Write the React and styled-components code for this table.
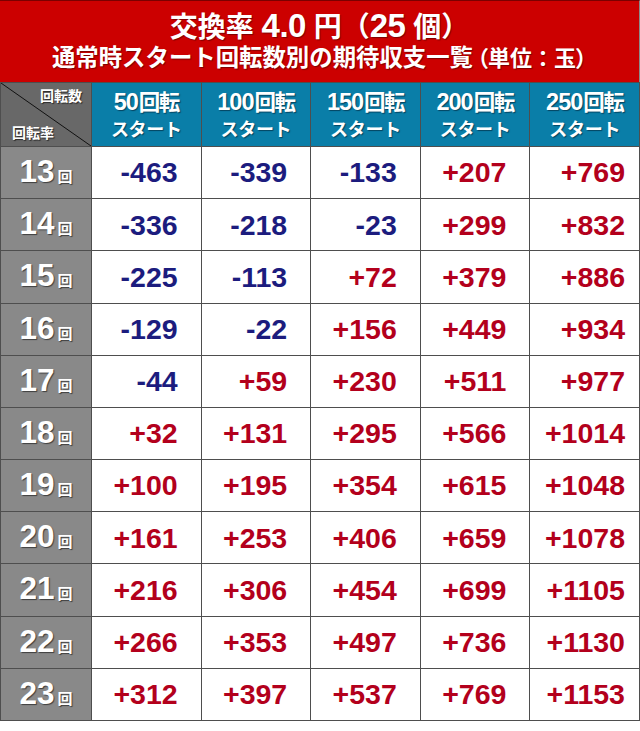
import React from "react";
import styled, { createGlobalStyle } from "styled-components";

const GlobalStyle = createGlobalStyle`
  html, body { margin: 0; padding: 0; background: #fff; }
  * { box-sizing: border-box; }
`;

const JP = `"Liberation Sans", "Noto Sans CJK JP", sans-serif`;

const Frame = styled.div`
  width: 640px;
  font-family: ${JP};
`;

const TitleBar = styled.div`
  height: 82px;
  background: #cc0000;
  border-top: 1px solid #7a0000;
  border-right: 1px solid #8a8a8a;
  display: flex;
  flex-direction: column;
  align-items: center;
  color: #fff;
  font-weight: 700;
  text-shadow: 1px 1px 1px rgba(60, 0, 0, 0.55);
`;

const TitleMain = styled.div`
  font-size: 28px;
  line-height: 34px;
  margin-top: 8px;
  height: 34px;
  display: flex;
  align-items: baseline;
  white-space: pre;
`;

const TitleNum = styled.span`
  font-size: 33px;
  letter-spacing: -0.5px;
`;

const SubTitle = styled.div`
  font-size: 23.4px;
  line-height: 26px;
  margin-top: 2px;
  white-space: pre;
`;

const SubNote = styled.span`
  font-size: 22px;
  margin-left: 4px;
`;

const Palt = styled.span`
  font-feature-settings: "palt";
`;

const Grid = styled.div`
  display: grid;
  grid-template-columns: 90px repeat(5, 1fr);
  grid-template-rows: 63px repeat(11, 1fr);
  height: 639px;
  gap: 1px;
  padding: 1px;
  background: #4e4e4e;
`;

const Corner = styled.div`
  position: relative;
  background: #686868;
  color: #fff;
  font-weight: 700;
  font-size: 14px;
  text-shadow: 1px 1px 1px rgba(0, 0, 0, 0.6);
  font-family: "Noto Sans CJK JP", sans-serif;
`;

const Diagonal = styled.svg`
  position: absolute;
  inset: 0;
  width: 100%;
  height: 100%;
`;

const CornerLabel = styled.span`
  position: absolute;
  line-height: 1;
  ${(p) => (p.$top ? "top: 5px; right: 9px;" : "bottom: 7px; left: 11px;")}
`;

const HeadCell = styled.div`
  background: #0a7ea8;
  color: #fff;
  font-weight: 700;
  display: flex;
  flex-direction: column;
  align-items: center;
  justify-content: flex-start;
  padding-top: 5px;
  text-shadow: 1px 1px 1px rgba(0, 30, 50, 0.6);
`;

const HeadTop = styled.div`
  display: flex;
  align-items: baseline;
  line-height: 26px;
  height: 26px;
`;

const HeadNum = styled.span`
  font-size: 23.5px;
  letter-spacing: -1px;
  margin-right: 1px;
`;

const HeadUnit = styled.span`
  font-size: 21.5px;
  letter-spacing: -1.5px;
  font-family: "Noto Sans CJK JP", sans-serif;
`;

const HeadSub = styled.div`
  font-size: 18px;
  letter-spacing: -0.3px;
  line-height: 20px;
  height: 20px;
  font-family: "Noto Sans CJK JP", sans-serif;
  margin-top: 4px;
`;

const RowHead = styled.div`
  background: #898989;
  color: #fff;
  font-weight: 700;
  display: flex;
  align-items: baseline;
  justify-content: center;
  padding-top: 9px;
  text-shadow: 1px 1px 1px rgba(0, 0, 0, 0.55);
`;

const RowNum = styled.span`
  font-size: 31.5px;
  line-height: 1;
`;

const RowUnit = styled.span`
  font-size: 15px;
  margin-left: 3px;
  font-family: "Noto Sans CJK JP", sans-serif;
`;

const ValueCell = styled.div`
  background: #fff;
  display: flex;
  align-items: center;
  justify-content: flex-end;
  padding-right: ${(p) => (p.$last ? "14px" : "23px")};
  font-size: 28.5px;
  font-weight: 700;
  color: ${(p) => (p.$neg ? "#1c1c7e" : "#b3001c")};
  line-height: 1;
`;

const cols = [50, 100, 150, 200, 250];

const rows = [
  [13, ["-463", "-339", "-133", "+207", "+769"]],
  [14, ["-336", "-218", "-23", "+299", "+832"]],
  [15, ["-225", "-113", "+72", "+379", "+886"]],
  [16, ["-129", "-22", "+156", "+449", "+934"]],
  [17, ["-44", "+59", "+230", "+511", "+977"]],
  [18, ["+32", "+131", "+295", "+566", "+1014"]],
  [19, ["+100", "+195", "+354", "+615", "+1048"]],
  [20, ["+161", "+253", "+406", "+659", "+1078"]],
  [21, ["+216", "+306", "+454", "+699", "+1105"]],
  [22, ["+266", "+353", "+497", "+736", "+1130"]],
  [23, ["+312", "+397", "+537", "+769", "+1153"]],
];

export default function App() {
  return (
    <>
      <GlobalStyle />
      <Frame>
        <TitleBar>
          <TitleMain>
            交換率 <TitleNum>4.0</TitleNum> 円（<TitleNum>25</TitleNum> 個）
          </TitleMain>
          <SubTitle>
            通常時スタート回転数別の期待収支一覧
            <SubNote>
              <Palt>（</Palt>単位：玉<Palt>）</Palt>
            </SubNote>
          </SubTitle>
        </TitleBar>
        <Grid>
          <Corner>
            <Diagonal viewBox="0 0 100 100" preserveAspectRatio="none">
              <line x1="0" y1="0" x2="100" y2="100" stroke="#111" strokeWidth="1" vectorEffect="non-scaling-stroke" />
            </Diagonal>
            <CornerLabel $top>回転数</CornerLabel>
            <CornerLabel>回転率</CornerLabel>
          </Corner>
          {cols.map((c) => (
            <HeadCell key={c}>
              <HeadTop>
                <HeadNum>{c}</HeadNum>
                <HeadUnit>回転</HeadUnit>
              </HeadTop>
              <HeadSub>スタート</HeadSub>
            </HeadCell>
          ))}
          {rows.map(([n, vals]) => (
            <React.Fragment key={n}>
              <RowHead>
                <RowNum>{n}</RowNum>
                <RowUnit>回</RowUnit>
              </RowHead>
              {vals.map((v, i) => (
                <ValueCell key={i} $neg={v.startsWith("-")} $last={i === 4}>
                  {v}
                </ValueCell>
              ))}
            </React.Fragment>
          ))}
        </Grid>
      </Frame>
    </>
  );
}
